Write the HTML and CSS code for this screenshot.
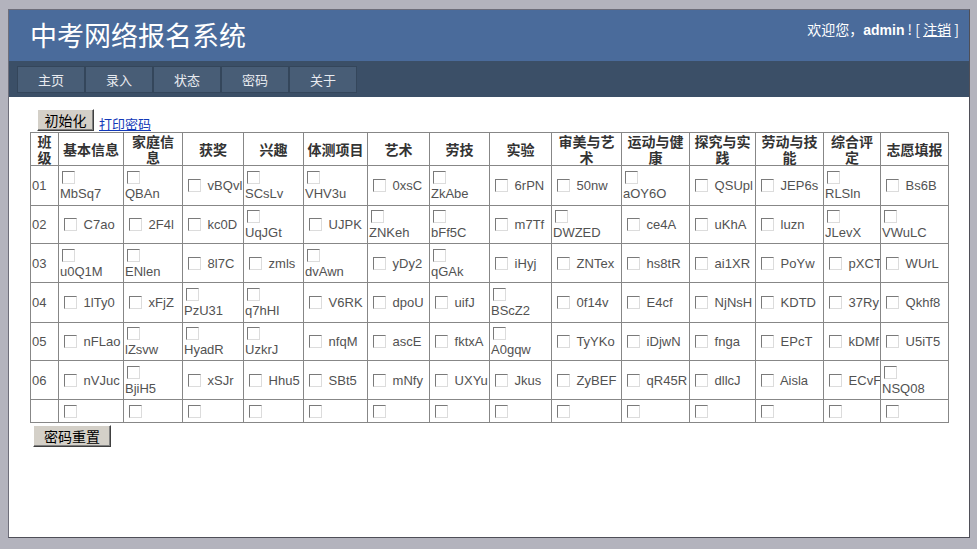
FILE: index.html
```html
<!DOCTYPE html>
<html lang="zh-CN">
<head>
<meta charset="utf-8">
<title>中考网络报名系统</title>
<link rel="stylesheet" href="styles.css">
</head>
<body>
<div class="page">
  <div class="header">
    <h1 class="title">中考网络报名系统</h1>
    <div class="welcome">欢迎您，<b>admin</b> ! [ <a href="#" class="logout">注销</a> ]</div>
  </div>
  <div class="nav">
    <ul>
      <li>主页</li>
      <li>录入</li>
      <li>状态</li>
      <li>密码</li>
      <li>关于</li>
    </ul>
  </div>
  <div class="content">
    <div class="toolbar">
      <button class="btn btn-init">初始化</button>
      <a href="#" class="print">打印密码</a>
    </div>
    <table class="grid">
      <colgroup>
        <col class="c1"><col class="c2"><col class="c3"><col class="c4"><col class="c5">
        <col class="c6"><col class="c7"><col class="c8"><col class="c9"><col class="c10">
        <col class="c11"><col class="c12"><col class="c13"><col class="c14"><col class="c15">
      </colgroup>
      <thead>
        <tr>
          <th><span class="hl">班</span><span class="hl">级</span></th>
          <th>基本信息</th>
          <th><span class="hl">家庭信</span><span class="hl">息</span></th>
          <th>获奖</th>
          <th>兴趣</th>
          <th>体测项目</th>
          <th>艺术</th>
          <th>劳技</th>
          <th>实验</th>
          <th><span class="hl">审美与艺</span><span class="hl">术</span></th>
          <th><span class="hl">运动与健</span><span class="hl">康</span></th>
          <th><span class="hl">探究与实</span><span class="hl">践</span></th>
          <th><span class="hl">劳动与技</span><span class="hl">能</span></th>
          <th><span class="hl">综合评</span><span class="hl">定</span></th>
          <th>志愿填报</th>
        </tr>
      </thead>
      <tbody>
        <tr class="r1">
          <td class="cls">01</td>
          <td class="w"><span class="cb"></span><span class="t">MbSq7</span></td>
          <td class="w"><span class="cb"></span><span class="t">QBAn</span></td>
          <td><span class="cb"></span> vBQvl</td>
          <td class="w"><span class="cb"></span><span class="t">SCsLv</span></td>
          <td class="w"><span class="cb"></span><span class="t">VHV3u</span></td>
          <td><span class="cb"></span> 0xsC</td>
          <td class="w"><span class="cb"></span><span class="t">ZkAbe</span></td>
          <td><span class="cb"></span> 6rPN</td>
          <td><span class="cb"></span> 50nw</td>
          <td class="w"><span class="cb"></span><span class="t">aOY6O</span></td>
          <td><span class="cb"></span> QSUpl</td>
          <td><span class="cb"></span> JEP6s</td>
          <td class="w"><span class="cb"></span><span class="t">RLSln</span></td>
          <td><span class="cb"></span> Bs6B</td>
        </tr>
        <tr class="r2">
          <td class="cls">02</td>
          <td><span class="cb"></span> C7ao</td>
          <td><span class="cb"></span> 2F4l</td>
          <td><span class="cb"></span> kc0D</td>
          <td class="w"><span class="cb"></span><span class="t">UqJGt</span></td>
          <td><span class="cb"></span> UJPK</td>
          <td class="w"><span class="cb"></span><span class="t">ZNKeh</span></td>
          <td class="w"><span class="cb"></span><span class="t">bFf5C</span></td>
          <td><span class="cb"></span> m7Tf</td>
          <td class="w"><span class="cb"></span><span class="t">DWZED</span></td>
          <td><span class="cb"></span> ce4A</td>
          <td><span class="cb"></span> uKhA</td>
          <td><span class="cb"></span> luzn</td>
          <td class="w"><span class="cb"></span><span class="t">JLevX</span></td>
          <td class="w"><span class="cb"></span><span class="t">VWuLC</span></td>
        </tr>
        <tr class="r3">
          <td class="cls">03</td>
          <td class="w"><span class="cb"></span><span class="t">u0Q1M</span></td>
          <td class="w"><span class="cb"></span><span class="t">ENlen</span></td>
          <td><span class="cb"></span> 8l7C</td>
          <td><span class="cb"></span> zmls</td>
          <td class="w"><span class="cb"></span><span class="t">dvAwn</span></td>
          <td><span class="cb"></span> yDy2</td>
          <td class="w"><span class="cb"></span><span class="t">qGAk</span></td>
          <td><span class="cb"></span> iHyj</td>
          <td><span class="cb"></span> ZNTex</td>
          <td><span class="cb"></span> hs8tR</td>
          <td><span class="cb"></span> ai1XR</td>
          <td><span class="cb"></span> PoYw</td>
          <td><span class="cb"></span> pXCT</td>
          <td><span class="cb"></span> WUrL</td>
        </tr>
        <tr class="r4">
          <td class="cls">04</td>
          <td><span class="cb"></span> 1lTy0</td>
          <td><span class="cb"></span> xFjZ</td>
          <td class="w"><span class="cb"></span><span class="t">PzU31</span></td>
          <td class="w"><span class="cb"></span><span class="t">q7hHI</span></td>
          <td><span class="cb"></span> V6RK</td>
          <td><span class="cb"></span> dpoU</td>
          <td><span class="cb"></span> uifJ</td>
          <td class="w"><span class="cb"></span><span class="t">BScZ2</span></td>
          <td><span class="cb"></span> 0f14v</td>
          <td><span class="cb"></span> E4cf</td>
          <td><span class="cb"></span> NjNsH</td>
          <td><span class="cb"></span> KDTD</td>
          <td><span class="cb"></span> 37Ry</td>
          <td><span class="cb"></span> Qkhf8</td>
        </tr>
        <tr class="r5">
          <td class="cls">05</td>
          <td><span class="cb"></span> nFLao</td>
          <td class="w"><span class="cb"></span><span class="t">lZsvw</span></td>
          <td class="w"><span class="cb"></span><span class="t">HyadR</span></td>
          <td class="w"><span class="cb"></span><span class="t">UzkrJ</span></td>
          <td><span class="cb"></span> nfqM</td>
          <td><span class="cb"></span> ascE</td>
          <td><span class="cb"></span> fktxA</td>
          <td class="w"><span class="cb"></span><span class="t">A0gqw</span></td>
          <td><span class="cb"></span> TyYKo</td>
          <td><span class="cb"></span> iDjwN</td>
          <td><span class="cb"></span> fnga</td>
          <td><span class="cb"></span> EPcT</td>
          <td><span class="cb"></span> kDMf</td>
          <td><span class="cb"></span> U5iT5</td>
        </tr>
        <tr class="r6">
          <td class="cls">06</td>
          <td><span class="cb"></span> nVJuc</td>
          <td class="w"><span class="cb"></span><span class="t">BjiH5</span></td>
          <td><span class="cb"></span> xSJr</td>
          <td><span class="cb"></span> Hhu5</td>
          <td><span class="cb"></span> SBt5</td>
          <td><span class="cb"></span> mNfy</td>
          <td><span class="cb"></span> UXYu</td>
          <td><span class="cb"></span> Jkus</td>
          <td><span class="cb"></span> ZyBEF</td>
          <td><span class="cb"></span> qR45R</td>
          <td><span class="cb"></span> dllcJ</td>
          <td><span class="cb"></span> Aisla</td>
          <td><span class="cb"></span> ECvF</td>
          <td class="w"><span class="cb"></span><span class="t">NSQ08</span></td>
        </tr>
        <tr class="r7">
          <td class="cls"></td>
          <td><span class="cb"></span></td>
          <td><span class="cb"></span></td>
          <td><span class="cb"></span></td>
          <td><span class="cb"></span></td>
          <td><span class="cb"></span></td>
          <td><span class="cb"></span></td>
          <td><span class="cb"></span></td>
          <td><span class="cb"></span></td>
          <td><span class="cb"></span></td>
          <td><span class="cb"></span></td>
          <td><span class="cb"></span></td>
          <td><span class="cb"></span></td>
          <td><span class="cb"></span></td>
          <td><span class="cb"></span></td>
        </tr>
      </tbody>
    </table>
    <button class="btn btn-reset">密码重置</button>
  </div>
</div>
</body>
</html>
```

FILE: styles.css
```css
html, body {
  margin: 0;
  padding: 0;
  background: #b3b3bd;
}
body {
  font-family: "Liberation Sans", "Noto Sans CJK SC", sans-serif;
}
.page {
  margin: 9px 0 0 8px;
  width: 960px;
  height: 527px;
  background: #fff;
  border: 1px solid #6e6e7a;
  border-right-color: #4f4f58;
  border-bottom-color: #4f4f58;
}
.header {
  background: #4a6b9b;
  height: 51px;
  display: flex;
  justify-content: space-between;
  align-items: flex-start;
}
.title {
  margin: 0;
  padding: 10px 0 0 21px;
  font: normal 27px/30px "Noto Sans CJK SC", sans-serif;
  color: #fff;
}
.welcome {
  padding: 10px 10px 0 0;
  color: #fff;
  font: 14px/18px "Noto Sans CJK SC", "Liberation Sans", sans-serif;
}
.welcome b {
  font-family: "Liberation Sans", sans-serif;
  font-weight: bold;
}
.logout {
  color: #fff;
  text-decoration: underline;
}
.nav {
  background: #3b4f67;
  height: 36px;
  padding: 5px 0 0 8px;
  box-sizing: border-box;
}
.nav ul {
  display: flex;
  margin: 0;
  padding: 0;
  list-style: none;
}
.nav li {
  width: 66px;
  height: 25px;
  border: 1px solid #34465b;
  background: #485d76;
  color: #e8ebf0;
  font: 13px/25px "Noto Sans CJK SC", sans-serif;
  text-align: center;
}
.content {
  padding: 12px 0 0 21px;
}
.toolbar {
  display: flex;
  align-items: flex-end;
  height: 23px;
}
.btn {
  font: 14px/18px "Noto Sans CJK SC", sans-serif;
  color: #000;
  background: #d4d0c8;
  border: 1px solid;
  border-color: #ffffff #404040 #404040 #ffffff;
  box-shadow: inset -1px -1px 0 #808080;
  padding: 0;
  height: 22px;
  margin: 0;
}
.btn-init {
  width: 57px;
  margin-left: 7px;
  align-self: flex-start;
}
.btn-reset {
  display: block;
  width: 78px;
  margin: 2px 0 0 3px;
}
.print {
  margin-left: 5px;
  color: #1238b8;
  font: 13px/17px "Noto Sans CJK SC", sans-serif;
  text-decoration: underline;
}
.grid {
  border-collapse: collapse;
  table-layout: fixed;
  width: 919px;
  color: #525252;
  font: 13px/15px "Liberation Sans", sans-serif;
}
.c1 { width: 28px; }
.c2 { width: 65px; }
.c3 { width: 59px; }
.c4 { width: 61px; }
.c5 { width: 60px; }
.c6 { width: 64px; }
.c7 { width: 62px; }
.c8 { width: 60px; }
.c9 { width: 62px; }
.c10 { width: 70px; }
.c11 { width: 68px; }
.c12 { width: 66px; }
.c13 { width: 68px; }
.c14 { width: 57px; }
.c15 { width: 68px; }
.grid th, .grid td {
  border: 1px solid #878787;
  padding: 0 1px;
  vertical-align: middle;
  white-space: nowrap;
  overflow: hidden;
}
.grid th {
  height: 32px;
  font: bold 14px/16px "Noto Sans CJK SC", sans-serif;
  color: #333;
  text-align: center;
}
.grid th .hl {
  display: block;
  height: 16px;
  line-height: 16px;
}
.grid td {
  text-align: left;
}
.r1 td { height: 39px; }
.r2 td { height: 37px; }
.r3 td { height: 38px; }
.r4 td { height: 39px; }
.r5 td { height: 37px; }
.r6 td { height: 38px; }
.r7 td { height: 22px; }
.cb {
  display: inline-block;
  width: 11px;
  height: 11px;
  margin: 0 3px 0 4px;
  vertical-align: -2px;
  background: #fff;
  border: 1px solid;
  border-color: #7a7a7a #dcdcdc #dcdcdc #7a7a7a;
}
.w .cb {
  display: block;
  margin: 2px 0 2px 2px;
}
.w .t {
  display: block;
  line-height: 16px;
}
```
